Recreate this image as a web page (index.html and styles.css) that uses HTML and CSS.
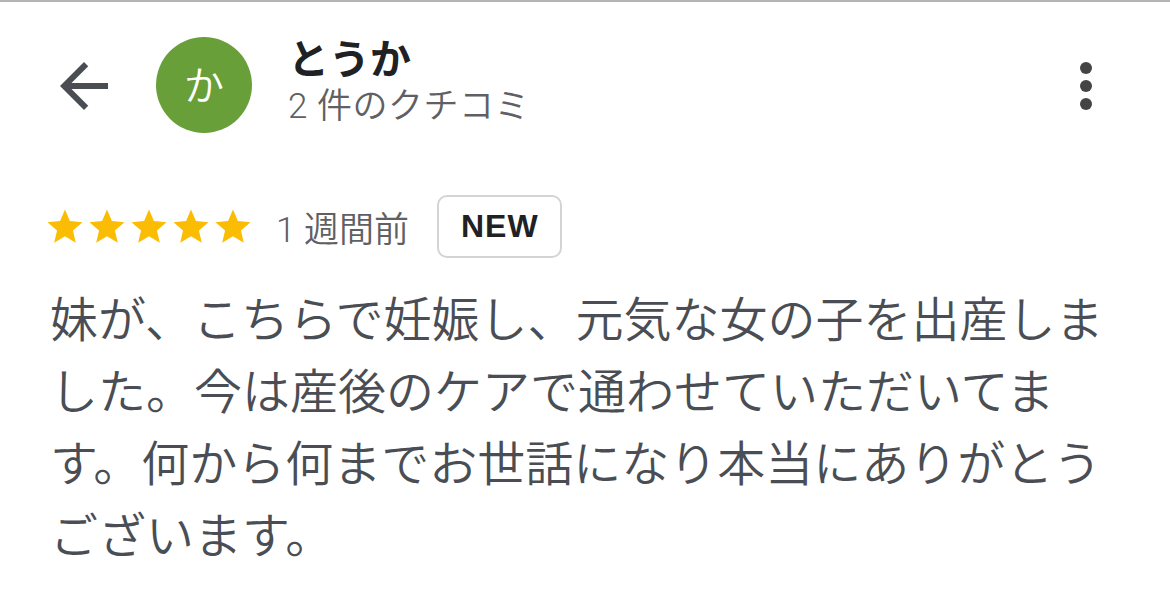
FILE: index.html
```html
<!DOCTYPE html>
<html lang="ja">
<head>
<meta charset="utf-8">
<title>とうか のクチコミ</title>
<link rel="stylesheet" href="styles.css">
</head>
<body>
<div class="page">
  <header class="header">
    <button class="icon-btn" aria-label="戻る">
      <svg viewBox="0 0 24 24" width="72" height="72"><path d="M20 11H7.83l5.59-5.59L12 4l-8 8 8 8 1.41-1.41L7.83 13H20v-2z"/></svg>
    </button>
    <div class="avatar">か</div>
    <div class="who">
      <div class="name">とうか</div>
      <div class="count">2 件のクチコミ</div>
    </div>
    <button class="icon-btn more" aria-label="その他">
      <svg viewBox="0 0 24 24" width="72" height="72"><circle cx="12" cy="6" r="2"/><circle cx="12" cy="12" r="2"/><circle cx="12" cy="18" r="2"/></svg>
    </button>
  </header>
  <section class="review">
    <div class="meta">
      <div class="stars">
        <svg viewBox="0 0 24 24" width="42" height="42"><path d="M12 17.27L18.18 21l-1.64-7.03L22 9.24l-7.19-.61L12 2 9.19 8.63 2 9.24l5.46 4.73L5.82 21z"/></svg>
        <svg viewBox="0 0 24 24" width="42" height="42"><path d="M12 17.27L18.18 21l-1.64-7.03L22 9.24l-7.19-.61L12 2 9.19 8.63 2 9.24l5.46 4.73L5.82 21z"/></svg>
        <svg viewBox="0 0 24 24" width="42" height="42"><path d="M12 17.27L18.18 21l-1.64-7.03L22 9.24l-7.19-.61L12 2 9.19 8.63 2 9.24l5.46 4.73L5.82 21z"/></svg>
        <svg viewBox="0 0 24 24" width="42" height="42"><path d="M12 17.27L18.18 21l-1.64-7.03L22 9.24l-7.19-.61L12 2 9.19 8.63 2 9.24l5.46 4.73L5.82 21z"/></svg>
        <svg viewBox="0 0 24 24" width="42" height="42"><path d="M12 17.27L18.18 21l-1.64-7.03L22 9.24l-7.19-.61L12 2 9.19 8.63 2 9.24l5.46 4.73L5.82 21z"/></svg>
      </div>
      <span class="when">1 週間前</span>
      <span class="badge">NEW</span>
    </div>
    <p class="text">妹が、こちらで妊娠し、元気な女の子を出産しました。今は産後のケアで通わせていただいてます。何から何までお世話になり本当にありがとうございます。</p>
  </section>
</div>
</body>
</html>
```
FILE: styles.css
```css
html, body {
  margin: 0;
  padding: 0;
  background: #ffffff;
}
body {
  font-family: Roboto, "Noto Sans CJK JP", "Noto Sans", sans-serif;
  border-top: 2px solid #b4b4b4;
}
.page {
  width: 1170px;
}
.header {
  display: flex;
  align-items: center;
  height: 168px;
  padding: 0 48px;
}
.icon-btn {
  width: 72px;
  height: 72px;
  padding: 0;
  border: 0;
  background: none;
  display: flex;
  flex: none;
}
.icon-btn svg {
  fill: #4a4d52;
}
.icon-btn.more {
  margin-left: auto;
}
.icon-btn.more svg {
  fill: #444444;
}
.avatar {
  width: 96px;
  height: 96px;
  border-radius: 50%;
  background: #689f38;
  color: #ffffff;
  font-size: 40px;
  font-weight: 350;
  line-height: 100px;
  text-align: center;
  margin-left: 36px;
  margin-top: -2px;
  flex: none;
}
.who {
  margin-left: 36px;
  margin-bottom: 7px;
}
.name {
  font-size: 41px;
  font-weight: 700;
  line-height: 48px;
  color: #202124;
}
.count {
  font-size: 35px;
  font-weight: 350;
  line-height: 46px;
  letter-spacing: 0.5px;
  color: #5f6064;
}
.review {
  padding: 0 50px;
}
.meta {
  display: flex;
  align-items: center;
  margin-top: 25px;
}
.stars {
  display: flex;
  margin-left: -6px;
}
.stars svg {
  fill: #fbbc04;
  display: block;
}
.when {
  margin-left: 22px;
  font-size: 35px;
  font-weight: 350;
  color: #5f6064;
}
.badge {
  margin-left: 28px;
  box-sizing: border-box;
  height: 63px;
  padding: 0 21px 0 22px;
  border: 2px solid #d4d4d4;
  border-radius: 10px;
  display: flex;
  align-items: center;
  font-family: "Liberation Sans", Arial, sans-serif;
  font-size: 32px;
  font-weight: 700;
  letter-spacing: 1px;
  color: #202124;
}
.text {
  margin: 27px 0 0;
  font-size: 48px;
  font-weight: 350;
  line-height: 72px;
  color: #4a4e54;
}
```
